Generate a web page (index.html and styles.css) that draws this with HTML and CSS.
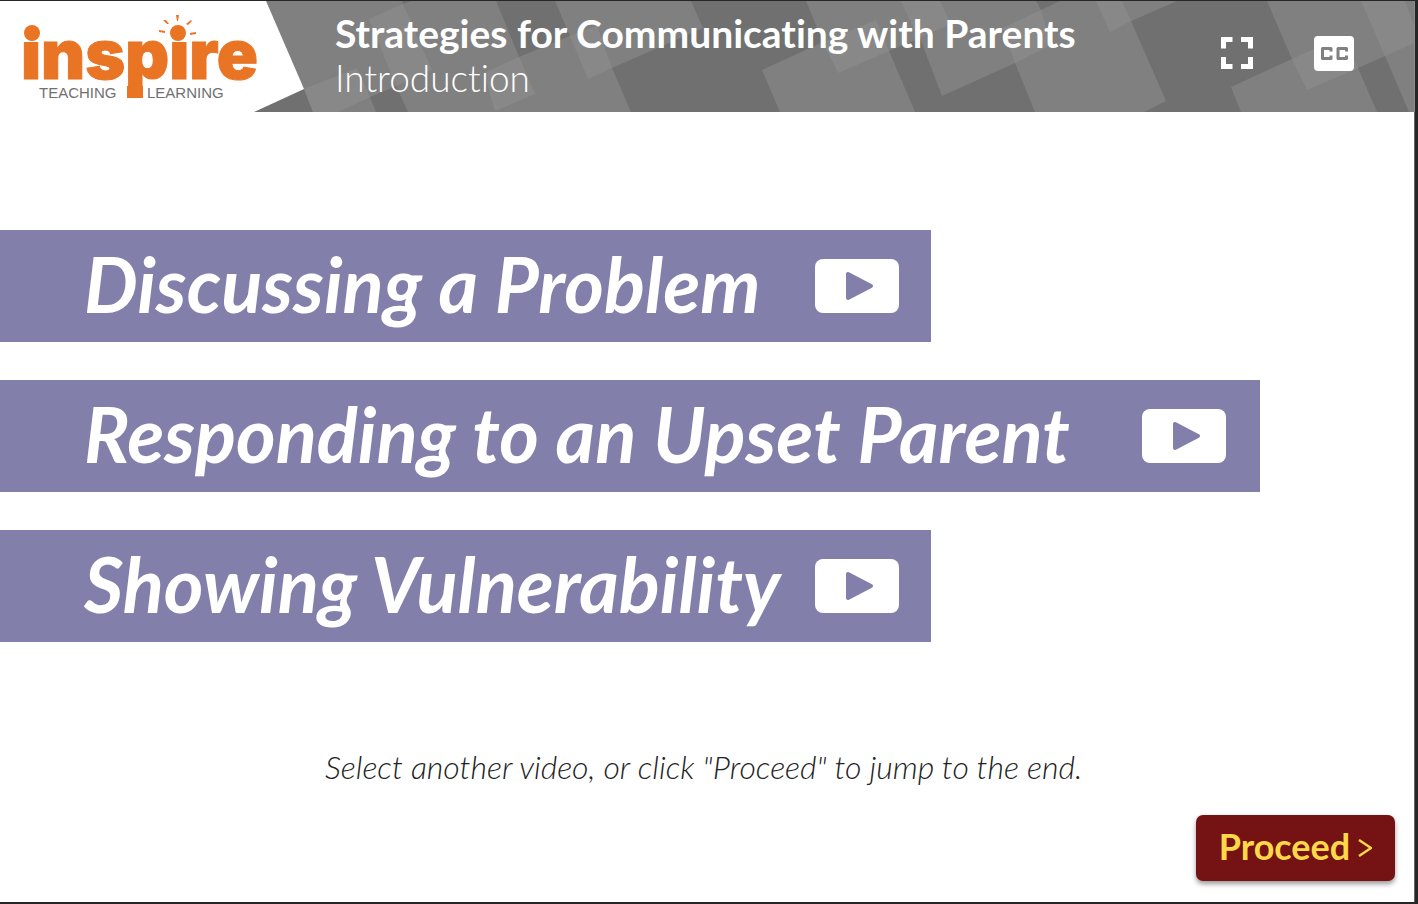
FILE: index.html
```
<!DOCTYPE html>
<html lang="en">
<head>
<meta charset="utf-8">
<title>Strategies for Communicating with Parents</title>
<link rel="stylesheet" href="styles.css">
</head>
<body>
<div class="player">
  <header class="banner">
    <svg class="banner-art" viewBox="0 0 1414 111" preserveAspectRatio="xMinYMin slice" aria-hidden="true">
      <rect class="tone-mid" width="1414" height="111"/>
      <g class="tone-dark">
        <path d="M254 111L304 88L313 111Z"/>
        <path d="M370 96L396 85L408 111H376Z"/>
        <path d="M403 3L411 0H402Z"/>
        <path d="M496 0H555L570 35L519 56Z"/>
        <path d="M691 0H806L823 41L762 69L780 111H631L612 67L703 27Z"/>
        <path d="M889 50L920 37L942 95L1015 62L1035 111H915Z"/>
        <path d="M1036 0H1060L1041 9Z"/>
        <path d="M1131 20L1177 0H1267L1292 58L1231 86L1241 111H1144L1166 100Z"/>
        <path d="M1358 67L1385 55L1409 111H1377Z"/>
      </g>
      <g class="tone-light">
        <path d="M304 88L357 67L370 96L338 111H313Z"/>
        <path d="M369 18L403 3L432 69L396 85Z"/>
        <path d="M484 72L519 56L535 93L495 110Z"/>
        <path d="M570 35L597 25L612 67L588 78Z"/>
        <path d="M823 41L876 19L889 50L838 72Z"/>
        <path d="M901 0H940L951 23L918 37Z"/>
        <path d="M1003 27L1041 9L1051 44L1015 62Z"/>
        <path d="M1096 0L1110 31L1131 20L1122 0Z"/>
        <path d="M1292 58L1342 35L1358 67L1307 89Z"/>
        <path d="M1361 0H1405L1414 24V42L1385 55Z"/>
      </g>
      <path class="tone-logo" d="M0 0H266L304 88L254 111H0Z"/>
    </svg>
    <svg class="logo" viewBox="0 0 304 111" role="img" aria-label="Inspire Teaching Learning">
      <text class="logo-name" x="21" y="78">inspire</text>
      <path class="tone-logo" d="M21 22h22v19H21zM168 22h21v19h-21z"/>
      <g class="logo-mark">
        <circle cx="32" cy="32" r="8"/>
        <circle cx="178" cy="32" r="8"/>
        <path d="M127 85h16v12h-16z"/>
        <path d="M176 14h3l-1 6h-1zM163 19l3 0 3 4-2 0zM191 19l1 1-4 4-2-1zM159 29l6 1v2l-6-1zM190 32l6-1v2l-6 1z"/>
      </g>
      <text class="logo-tag" x="39" y="97">TEACHING</text>
      <text class="logo-tag" x="147" y="97">LEARNING</text>
    </svg>
    <div class="titles">
      <h1 class="title">Strategies for Communicating with Parents</h1>
      <p class="subtitle">Introduction</p>
    </div>
    <div class="tools">
      <button class="tool" type="button" aria-label="Full screen">
        <svg width="34" height="34" viewBox="0 0 34 34"><path fill="none" stroke="#fff" stroke-width="5" d="M3.500 12.500V3.500H12.500M21 3.500H30.500V12.500M30.500 21V30.500H21M12.500 30.500H3.500V21"/></svg>
      </button>
      <button class="tool" type="button" aria-label="Closed captions">
        <svg width="40" height="36" viewBox="0 0 40 36"><rect y="1" width="40" height="35" rx="4" fill="#fff"/><path fill="none" stroke="#808080" stroke-width="3" stroke-linejoin="round" d="M17 16.500V13.500H8.500V23.500H17V20.500M32.500 16.500V13.500H24V23.500H32.500V20.500"/></svg>
      </button>
    </div>
  </header>

  <main class="stage">
    <nav class="videos" aria-label="Videos">
      <a class="video" href="#discussing"><span class="video-name">Discussing a Problem</span>
        <svg class="play" viewBox="0 0 84 54" aria-hidden="true"><rect width="84" height="54" rx="8"/><path d="M33 15V39L56 27Z"/></svg></a>
      <a class="video video-wide" href="#responding"><span class="video-name">Responding to an Upset Parent</span>
        <svg class="play" viewBox="0 0 84 54" aria-hidden="true"><rect width="84" height="54" rx="8"/><path d="M33 15V39L56 27Z"/></svg></a>
      <a class="video" href="#showing"><span class="video-name">Showing Vulnerability</span>
        <svg class="play" viewBox="0 0 84 54" aria-hidden="true"><rect width="84" height="54" rx="8"/><path d="M33 15V39L56 27Z"/></svg></a>
    </nav>
    <p class="hint">Select another video, or click "Proceed" to jump to the end.</p>
    <button class="proceed" type="button">Proceed <svg width="14" height="18" viewBox="0 0 14 18" aria-hidden="true"><path d="M1 1L13 9L1 17" fill="none" stroke="currentColor" stroke-width="2.500"/></svg></button>
  </main>
</div>
</body>
</html>
```
FILE: styles.css
```
* { box-sizing: border-box; }
body {
  margin: 0;
  background: #262626;
  font-family: Lato, "Open Sans", sans-serif;
  font-variant-ligatures: none;
}
.player {
  min-height: 100vh;
  display: flex;
  flex-direction: column;
  border: solid #262626;
  border-width: 1px 3px 2px 0;
}
.banner {
  position: relative;
  display: flex;
  align-items: flex-start;
  height: 111px;
  color: #fff;
  border-right: 1px solid #8c8c8c;
  overflow: hidden;
}
.banner-art {
  position: absolute;
  inset: 0;
  width: 100%;
  height: 100%;
}
.tone-mid { fill: #808080; }
.tone-dark { fill: #707070; }
.tone-light { fill: #888; }
.tone-logo { fill: #fff; }
.logo { position: relative; width: 304px; height: 111px; flex: none; }
.logo-name { font: 900 68px Inter, sans-serif; fill: #e87424; stroke: #e87424; stroke-width: 1px; }
.logo-mark { fill: #e87424; }
.logo-tag { font: 15px "Liberation Sans", sans-serif; fill: #707070; }
.titles { position: relative; flex: 1; padding: 10px 0 0 31px; white-space: nowrap; }
.title { margin: 0; font-size: 39px; line-height: 44px; font-weight: 700; }
.subtitle { margin: 0; font-size: 37px; line-height: 46px; font-weight: 300; }
.tools { position: relative; display: flex; gap: 60px; padding: 34px 60px 0 0; }
.tool {
  display: flex;
  align-items: center;
  height: 36px;
  padding: 0;
  border: 0;
  background: none;
}
.stage {
  flex: 1;
  display: flex;
  flex-direction: column;
  padding: 118px 19px 21px 0;
  background: #fff;
  border-right: 1px solid #666;
}
.videos { display: flex; flex-direction: column; gap: 38px; }
.video {
  display: flex;
  align-items: center;
  justify-content: space-between;
  width: 931px;
  max-width: 100%;
  height: 112px;
  padding: 0 32px 0 84px;
  background: #827fab;
  color: #fff;
  text-decoration: none;
  white-space: nowrap;
}
.video-wide { width: 1260px; padding-right: 34px; }
.video-name { font-size: 76px; line-height: 84px; padding-bottom: 4px; font-weight: 700; font-style: italic; }
.play { width: 84px; height: 54px; flex: none; fill: #fff; }
.play path { fill: #827fab; stroke: #827fab; stroke-width: 4; stroke-linejoin: round; }
.hint {
  margin: 107px 0 0 325px;
  font-size: 32px;
  line-height: 36px;
  font-weight: 300;
  font-style: italic;
  color: #222;
}
.proceed {
  display: flex;
  align-items: center;
  justify-content: center;
  gap: 8px;
  align-self: flex-end;
  width: 199px;
  height: 66px;
  margin-top: auto;
  padding: 0 0 4px;
  border: 0;
  border-radius: 7px;
  background: #741214;
  box-shadow: 0 3px 5px rgba(0, 0, 0, .4);
  color: #fdd849;
  font: 700 36px/44px Lato, sans-serif;
}
.proceed svg { margin-top: 3px; }
```
